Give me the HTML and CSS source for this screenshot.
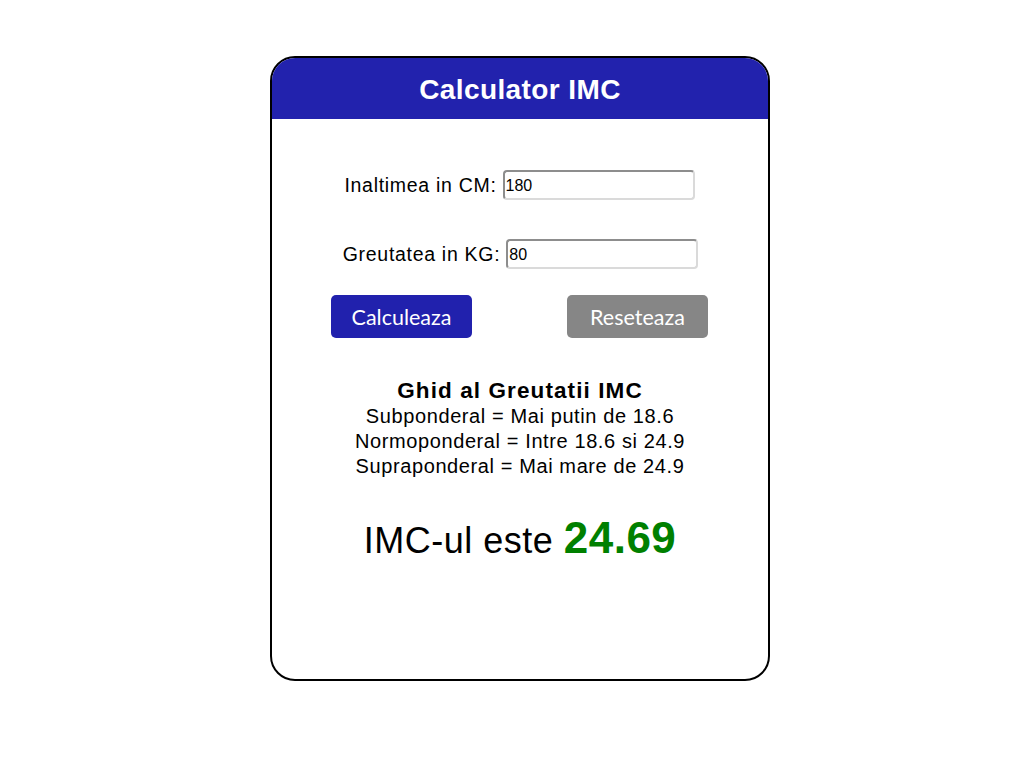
FILE: index.html
```html
<!DOCTYPE html>
<html lang="ro">
<head>
<meta charset="utf-8">
<title>Calculator IMC</title>
<link rel="stylesheet" href="styles.css">
</head>
<body>
<div class="card">
  <div class="card-header">
    <h1 class="title">Calculator IMC</h1>
  </div>
  <div class="card-body">
    <div class="field field-height">
      <label class="label" for="h">Inaltimea in CM:</label>
      <input class="input" id="h" type="text" value="180">
    </div>
    <div class="field field-weight">
      <label class="label" for="w">Greutatea in KG:</label>
      <input class="input" id="w" type="text" value="80">
    </div>
    <div class="buttons">
      <button class="btn btn-primary">Calculeaza</button>
      <button class="btn btn-secondary">Reseteaza</button>
    </div>
    <div class="guide">
      <div class="guide-title">Ghid al Greutatii IMC</div>
      <div class="guide-line">Subponderal = Mai putin de 18.6</div>
      <div class="guide-line">Normoponderal = Intre 18.6 si 24.9</div>
      <div class="guide-line">Supraponderal = Mai mare de 24.9</div>
    </div>
    <div class="result">IMC-ul este <span class="result-value">24.69</span></div>
  </div>
</div>
</body>
</html>
```

FILE: styles.css
```css
html, body {
  margin: 0;
  padding: 0;
  background: #ffffff;
}
body {
  font-family: "Liberation Sans", Arial, sans-serif;
  color: #000;
  padding-top: 56px;
}
.card {
  box-sizing: border-box;
  width: 500px;
  height: 625px;
  margin-left: 270px;
  border: 2px solid #000;
  border-radius: 25px;
  overflow: hidden;
  background: #fff;
}
.card-header {
  background: #2222ad;
  height: 61px;
  display: flex;
  align-items: center;
  justify-content: center;
}
.title {
  margin: 0;
  color: #fff;
  font-size: 28px;
  letter-spacing: 0.4px;
  font-weight: bold;
  line-height: 1;
  padding-top: 2px;
}
.card-body {
  display: flex;
  flex-direction: column;
  align-items: stretch;
}
.field {
  display: flex;
  justify-content: center;
  align-items: center;
  gap: 6px;
  height: 30px;
}
.field-height {
  margin-top: 51px;
  padding-right: 1px;
}
.field-weight {
  margin-top: 39px;
  padding-left: 1px;
}
.label {
  font-size: 19.5px;
  letter-spacing: 0.7px;
}
.input {
  box-sizing: border-box;
  width: 192px;
  height: 30px;
  margin: 0;
  padding: 1px 1px 0;
  font-family: "Liberation Sans", Arial, sans-serif;
  font-size: 16px;
  color: #000;
  border: 2px solid;
  border-color: #8d8d8d #dadada #dadada #8d8d8d;
  border-radius: 4px;
  background: #fff;
}
.buttons {
  display: flex;
  justify-content: space-between;
  padding: 0 60px 0 59px;
  margin-top: 26px;
}
.btn {
  width: 141px;
  height: 43px;
  border: none;
  border-radius: 5px;
  color: #fff;
  font-family: Lato, "Open Sans", sans-serif;
  font-size: 21.5px;
  padding: 0;
}
.btn-primary {
  background: #2121ad;
}
.btn-secondary {
  background: #868686;
}
.guide {
  margin-top: 39px;
  text-align: center;
}
.guide-title {
  font-size: 22.5px;
  letter-spacing: 1.1px;
  font-weight: bold;
  line-height: 27px;
}
.guide-line {
  font-size: 20px;
  letter-spacing: 0.6px;
  line-height: 25px;
}
.result {
  margin-top: 34px;
  text-align: center;
  font-size: 36px;
  letter-spacing: 0.5px;
  line-height: 50px;
}
.result-value {
  color: #008000;
  font-weight: bold;
  font-size: 44px;
}
```
